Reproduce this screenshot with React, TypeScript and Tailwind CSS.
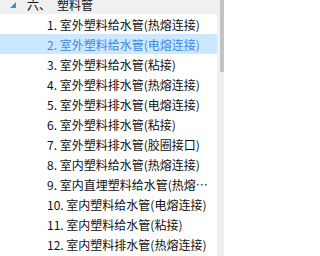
import React from "react"

const items = [
  "1. 室外塑料给水管(热熔连接)",
  "2. 室外塑料给水管(电熔连接)",
  "3. 室外塑料给水管(粘接)",
  "4. 室外塑料排水管(热熔连接)",
  "5. 室外塑料排水管(电熔连接)",
  "6. 室外塑料排水管(粘接)",
  "7. 室外塑料排水管(胶圈接口)",
  "8. 室内塑料给水管(热熔连接)",
  "9. 室内直埋塑料给水管(热熔连接)",
  "10. 室内塑料给水管(电熔连接)",
  "11. 室内塑料给水管(粘接)",
  "12. 室内塑料排水管(热熔连接)",
]

export default function App() {
  return (
    <div className="w-[224px] h-[256px] overflow-hidden flex bg-white text-[12px] font-['Noto_Sans_CJK_SC',sans-serif]">
      {/* Tree */}
      <div className="w-[217px] h-full overflow-hidden">
        <div className="-mt-[6px]">
          <div className="h-[20px] bg-[#f0f0f0] flex items-center text-[#111]">
            <svg width="6" height="6" viewBox="0 0 6 6" className="ml-[10px] mt-[1px]">
              <polygon points="6,0 6,6 0,6" fill="#3a8ee6" />
            </svg>
            <span className="ml-[11px] pt-[2px] leading-[18px]">六、</span>
            <span className="ml-[6px] pt-[2px] leading-[18px]">塑料管</span>
          </div>
          {items.map((t, i) => (
            <div
              key={i}
              className={
                i === 1
                  ? "h-[20px] pt-[2px] leading-[18px] pl-[47px] pr-[6px] truncate bg-[#cce8ff] text-[#3a88e8]"
                  : "h-[20px] pt-[2px] leading-[18px] pl-[47px] pr-[6px] truncate text-[#111]"
              }
            >
              {t}
            </div>
          ))}
        </div>
      </div>
      {/* Scrollbar */}
      <div className="w-[7px] h-full bg-[#f0f0f0] flex flex-col">
        <div className="ml-[3px] w-[4px] h-[72px] bg-[#c2c2c2]" />
      </div>
    </div>
  )
}
